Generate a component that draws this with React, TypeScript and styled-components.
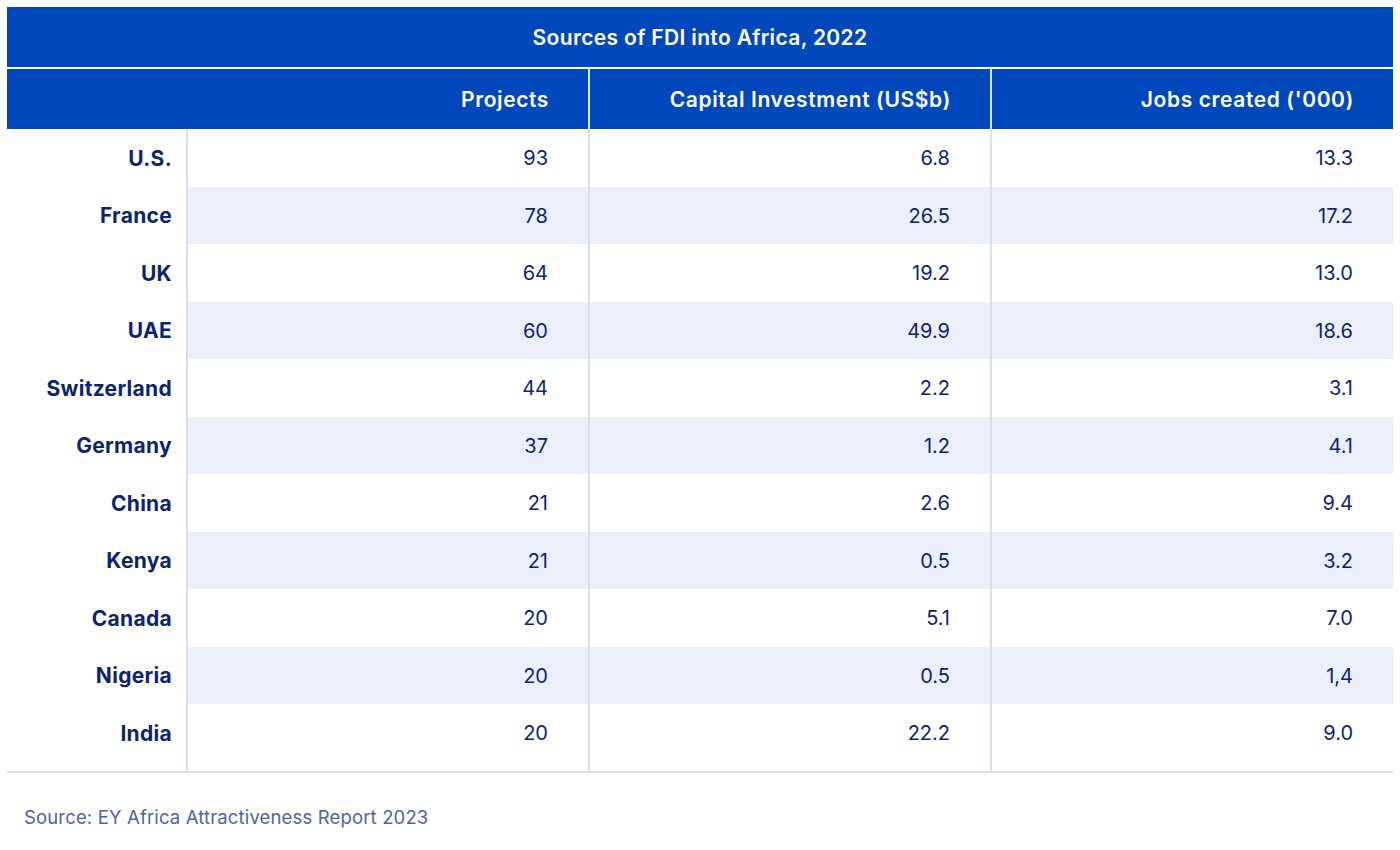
import { FC } from "react";
import styled, { createGlobalStyle } from "styled-components";

const GlobalStyle = createGlobalStyle`
    body {
        margin: 0;
        background: #ffffff;
        font-family: Inter, "Liberation Sans", sans-serif;
    }
`;

const rows = [
    { country: 'U.S.', projects: '93', capital: '6.8', jobs: '13.3' },
    { country: 'France', projects: '78', capital: '26.5', jobs: '17.2' },
    { country: 'UK', projects: '64', capital: '19.2', jobs: '13.0' },
    { country: 'UAE', projects: '60', capital: '49.9', jobs: '18.6' },
    { country: 'Switzerland', projects: '44', capital: '2.2', jobs: '3.1' },
    { country: 'Germany', projects: '37', capital: '1.2', jobs: '4.1' },
    { country: 'China', projects: '21', capital: '2.6', jobs: '9.4' },
    { country: 'Kenya', projects: '21', capital: '0.5', jobs: '3.2' },
    { country: 'Canada', projects: '20', capital: '5.1', jobs: '7.0' },
    { country: 'Nigeria', projects: '20', capital: '0.5', jobs: '1,4' },
    { country: 'India', projects: '20', capital: '22.2', jobs: '9.0' },
];

const Page = styled.div`
    padding: 7px;
    width: 1386px;
`;

const Table = styled.div`
    display: flex;
    flex-direction: column;
    border-bottom: 2px solid #dadfeb;
`;

const Title = styled.div`
    height: 60px;
    background: #0048bc;
    color: #ffffff;
    display: flex;
    align-items: center;
    justify-content: center;
    font-size: 21px;
    font-weight: 600;
    letter-spacing: 0.35px;
    border-bottom: 2px solid #ffffff;
`;

const HeadRow = styled.div`
    display: grid;
    grid-template-columns: 581px 402px 403px;
    height: 60px;
    background: #0048bc;
`;

const HeadCell = styled.div<{ $divider?: boolean }>`
    display: flex;
    align-items: center;
    justify-content: flex-end;
    padding-right: 39px;
    color: #ffffff;
    font-size: 21px;
    font-weight: 600;
    letter-spacing: 0.6px;
    border-left: ${(p) => (p.$divider ? '2px solid #dfe6f5' : 'none')};
`;

const Row = styled.div<{ $last?: boolean }>`
    display: grid;
    grid-template-columns: 179px 402px 402px 403px;
    height: ${(p) => (p.$last ? '66.5px' : '57.5px')};
`;

const Label = styled.div`
    display: flex;
    align-items: center;
    justify-content: flex-end;
    padding-right: 14px;
    height: 58.5px;
    color: #0b2470;
    font-size: 21px;
    font-weight: 700;
    letter-spacing: 0.3px;
`;

const Value = styled.div<{ $striped?: boolean }>`
    display: flex;
    align-items: flex-start;
    justify-content: flex-end;
    padding-right: 40px;
    padding-top: 1px;
    line-height: 57.5px;
    color: #0b2470;
    font-size: 20px;
    font-weight: 400;
    background: ${(p) => (p.$striped ? '#ebeff9' : '#ffffff')};
    border-left: 2px solid #dadfeb;
`;

const Source = styled.p`
    margin: 33px 0 0 17px;
    color: #4f649f;
    font-size: 18.5px;
    font-weight: 400;
    letter-spacing: 0.15px;
`;

const FdiTable: FC = () => (
    <Table>
        <Title>Sources of FDI into Africa, 2022</Title>
        <HeadRow>
            <HeadCell>Projects</HeadCell>
            <HeadCell $divider>Capital Investment (US$b)</HeadCell>
            <HeadCell $divider>Jobs created ('000)</HeadCell>
        </HeadRow>
        {rows.map((row, index) => {
            const striped = index % 2 === 1;
            return (
                <Row key={row.country} $last={index === rows.length - 1}>
                    <Label>{row.country}</Label>
                    <Value $striped={striped}>{row.projects}</Value>
                    <Value $striped={striped}>{row.capital}</Value>
                    <Value $striped={striped}>{row.jobs}</Value>
                </Row>
            );
        })}
    </Table>
);

export default function App() {
    return (
        <Page>
            <GlobalStyle />
            <FdiTable />
            <Source>Source: EY Africa Attractiveness Report 2023</Source>
        </Page>
    );
}
